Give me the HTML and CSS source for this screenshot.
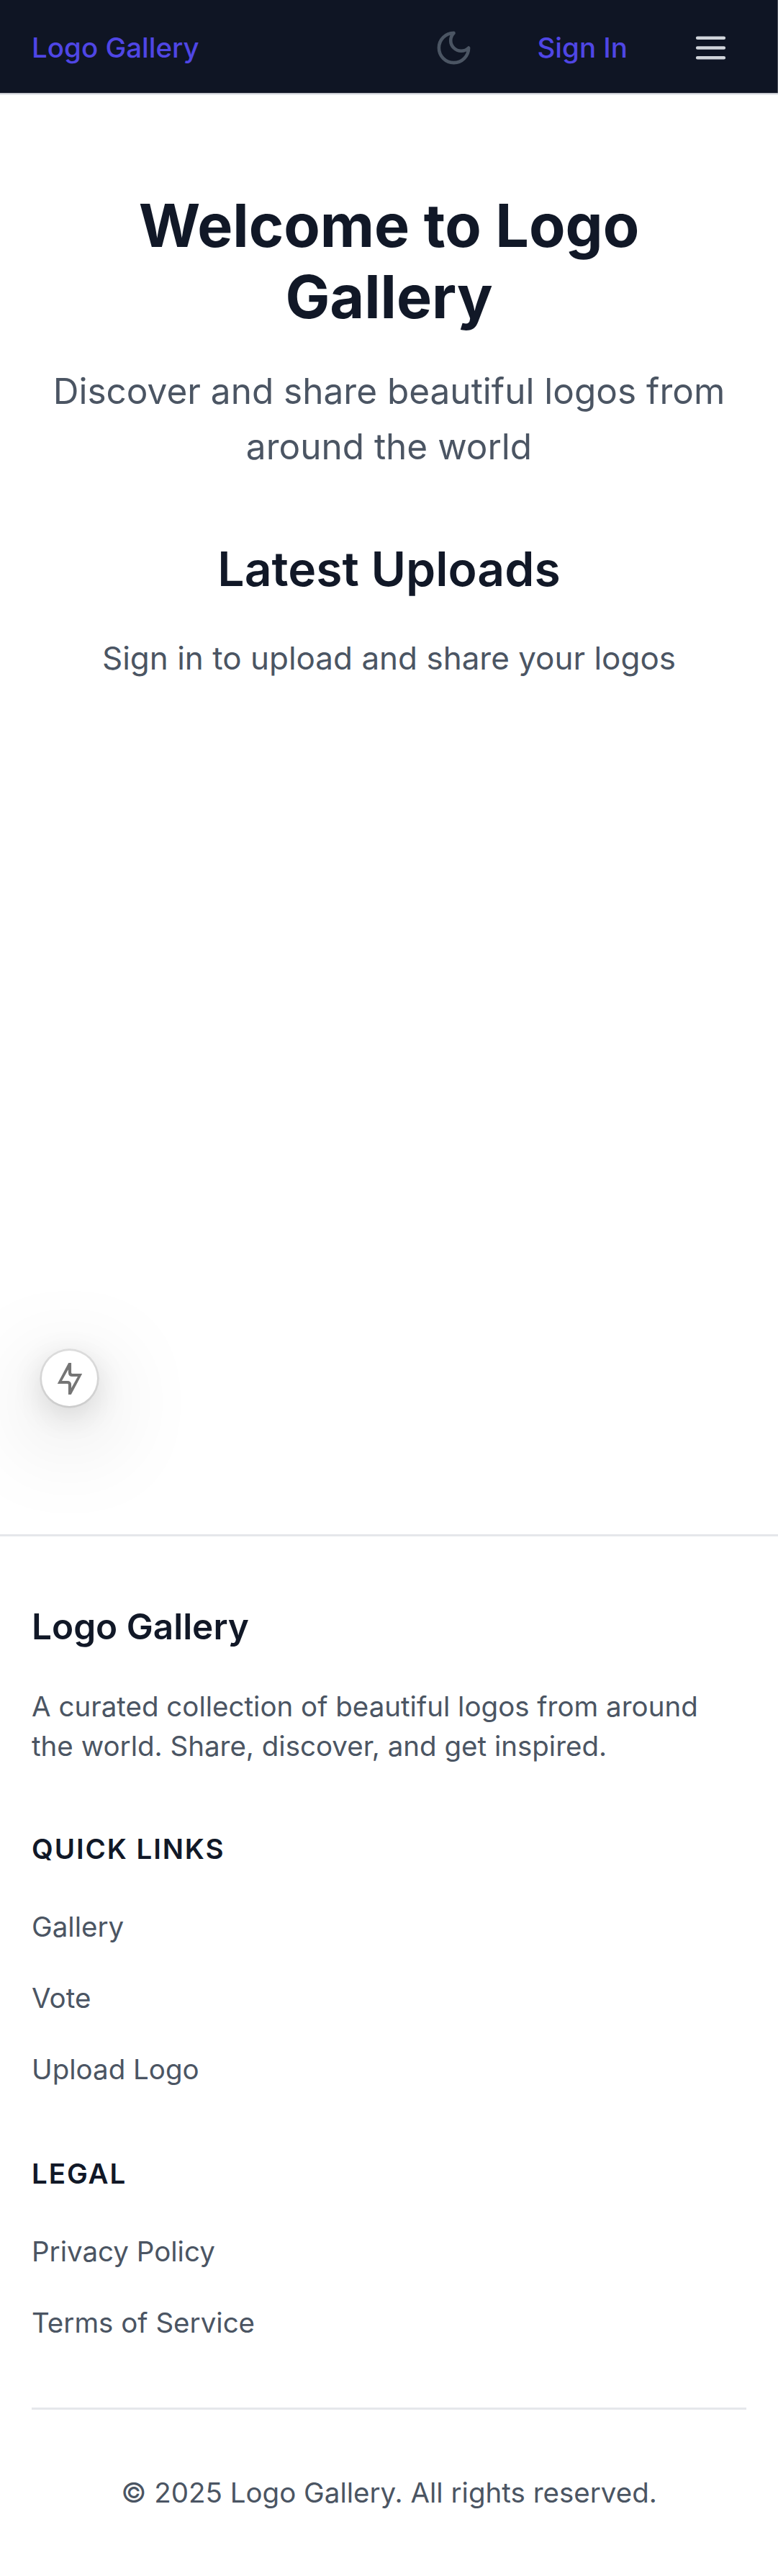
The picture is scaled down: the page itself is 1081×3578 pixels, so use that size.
FILE: index.html
```html
<!DOCTYPE html>
<html lang="en">
<head>
<meta charset="utf-8">
<title>Logo Gallery</title>
<link rel="stylesheet" href="styles.css">
</head>
<body>
<header class="header">
  <a class="brand">Logo Gallery</a>
  <nav class="actions">
    <button class="icon-button moon" aria-label="Toggle theme">
      <svg class="icon" viewBox="0 0 24 24"><path d="M12 3a6 6 0 0 0 9 9 9 9 0 1 1-9-9Z"/></svg>
    </button>
    <a class="sign-in">Sign In</a>
    <button class="icon-button menu" aria-label="Open menu">
      <svg class="icon" viewBox="0 0 24 24"><path d="M4 6h16M4 12h16M4 18h16"/></svg>
    </button>
  </nav>
</header>
<main class="main">
  <h1 class="title">Welcome to Logo Gallery</h1>
  <p class="lead">Discover and share beautiful logos from around the world</p>
  <h2 class="section-title">Latest Uploads</h2>
  <p class="hint">Sign in to upload and share your logos</p>
  <button class="float-button" aria-label="Open tools">
    <svg class="bolt" viewBox="0 0 16 16"><path d="M7.35 0H8.75V4.95Q8.75 5.45 9.25 5.45H14.25L8.65 16H7.25V11.05Q7.25 10.55 6.75 10.55H1.75ZM7.2 3.35L4 9.05H6.75Q8.75 9.05 8.75 11.05V12.75L12 6.95H9.25Q7.25 6.95 7.25 4.95Z"/></svg>
  </button>
</main>
<footer class="footer">
  <section>
    <h3 class="footer-brand">Logo Gallery</h3>
    <p class="about">A curated collection of beautiful logos from around the world. Share, discover, and get inspired.</p>
  </section>
  <section>
    <h4 class="footer-heading">Quick Links</h4>
    <ul class="links">
      <li><a>Gallery</a></li>
      <li><a>Vote</a></li>
      <li><a>Upload Logo</a></li>
    </ul>
  </section>
  <section>
    <h4 class="footer-heading">Legal</h4>
    <ul class="links">
      <li><a>Privacy Policy</a></li>
      <li><a>Terms of Service</a></li>
    </ul>
  </section>
  <p class="copyright">© 2025 Logo Gallery. All rights reserved.</p>
</footer>
</body>
</html>
```
FILE: styles.css
```css
html { font-size: 44px; }
*, *::before, *::after { box-sizing: border-box; }
body {
  margin: 0;
  display: flex;
  flex-direction: column;
  min-height: 3578px;
  background: #fff;
  color: #4b5563;
  font-family: Inter, "Liberation Sans", sans-serif;
  line-height: 1.5;
}
h1, h2, h3, h4, p, ul { margin: 0; padding: 0; }
ul { list-style: none; }
button { border: 0; padding: 0; background: none; }

.header {
  display: flex;
  align-items: center;
  justify-content: space-between;
  height: 132px;
  padding: 2px 1rem 0;
  background: #0f1524;
  border-bottom: 2px solid #e5e7eb;
  box-shadow: inset 0 -1px #afb1b8, inset -1px 0 #4b505b;
}
.brand, .sign-in {
  color: #4f46e5;
  font-size: 0.875rem;
  font-weight: 500;
  line-height: 1.25rem;
}
.actions { display: flex; align-items: center; gap: 0.75rem; }
.sign-in { padding: 0 0.75rem; }
.icon-button { display: flex; padding: 0.5rem; }
.icon {
  width: 1.25rem;
  height: 1.25rem;
  fill: none;
  stroke: currentColor;
  stroke-width: 2;
  stroke-linecap: round;
  stroke-linejoin: round;
}
.moon { color: #4b5563; }
.menu { color: #d1d5db; }

.main {
  position: relative;
  flex: 1;
  padding: 3rem 1rem;
  text-align: center;
}
.title {
  margin-bottom: 42.5px;
  color: #111827;
  font-size: 1.875rem;
  font-weight: 700;
  line-height: 2.25rem;
}
.lead {
  margin-bottom: 87.5px;
  font-size: 1.125rem;
  line-height: 1.75rem;
}
.section-title {
  margin-bottom: 47px;
  color: #111827;
  font-size: 1.5rem;
  font-weight: 600;
  line-height: 2rem;
}
.hint { font-size: 1rem; }

.float-button {
  position: absolute;
  left: 58px;
  bottom: 178px;
  display: flex;
  align-items: center;
  justify-content: center;
  width: 77px;
  height: 77px;
  border-radius: 50%;
  background: #fff;
  box-shadow: 0 0 0 2.75px rgba(0, 0, 0, 0.09), 0 11px 44px rgba(0, 0, 0, 0.14), 0 33px 132px rgba(0, 0, 0, 0.26);
}
.bolt { width: 44px; height: 44px; fill: #757575; fill-rule: evenodd; }

.footer {
  display: flex;
  flex-direction: column;
  gap: 2rem;
  padding: 2rem 1rem;
  border-top: 3px solid #e5e7eb;
}
.footer-brand {
  margin: -1.5px 0 45.5px;
  color: #111827;
  font-size: 1.125rem;
  font-weight: 600;
  line-height: 1.75rem;
}
.about { font-size: 0.875rem; line-height: 1.25rem; }
.footer-heading {
  margin-bottom: 1rem;
  color: #111827;
  font-size: 0.875rem;
  font-weight: 600;
  line-height: 1.25rem;
  letter-spacing: 0.05em;
  text-transform: uppercase;
}
.links {
  display: flex;
  flex-direction: column;
  gap: 0.75rem;
  margin-bottom: -1px;
  padding-top: 1px;
}
.links a { font-size: 0.875rem; }
.copyright {
  padding-top: 2rem;
  border-top: 3px solid #e5e7eb;
  font-size: 0.875rem;
  line-height: 1.25rem;
  text-align: center;
}
```
